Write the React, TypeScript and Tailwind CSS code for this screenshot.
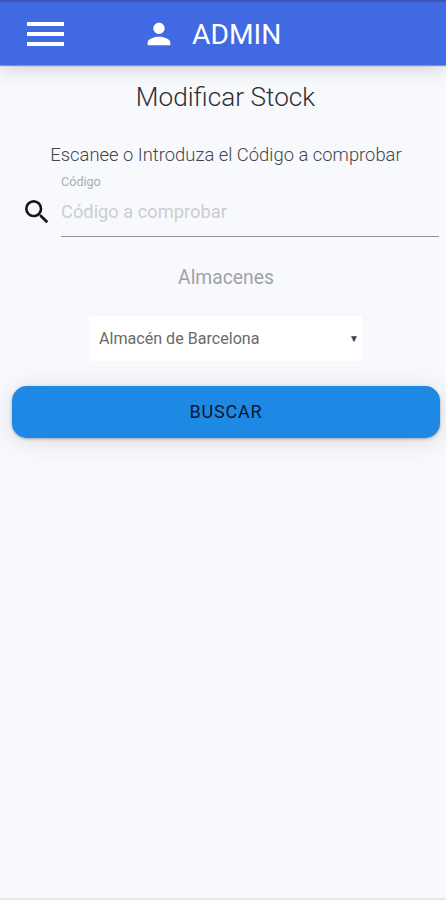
export default function App() {
  return (
    <div className="flex h-[900px] w-full flex-col overflow-hidden border-b-2 border-[#e6e7eb] bg-[#f7f9fd] font-[Roboto,sans-serif] text-[#303030]">
      <header className="flex h-[65px] w-full shrink-0 items-center border-t-2 border-[#3d56b2] bg-[#4169e1] shadow-[0_1px_1px_rgba(60,80,140,0.55),0_4px_18px_rgba(0,0,0,0.16)]">
        <div className="ml-[27px] flex w-[37px] flex-col gap-[6px]">
          <div className="h-[4px] bg-white" />
          <div className="h-[4px] bg-white" />
          <div className="h-[4px] bg-white" />
        </div>
        <svg className="ml-[78px] size-[34px]" viewBox="0 0 24 24" fill="white"><path d="M12 12c2.21 0 4-1.79 4-4s-1.79-4-4-4-4 1.79-4 4 1.79 4 4 4zm0 2c-2.67 0-8 1.34-8 4v2h16v-2c0-2.66-5.33-4-8-4z" /></svg>
        <span className="ml-[16px] pt-[2px] text-[28.2px] leading-8 text-white">ADMIN</span>
      </header>
      <h1 className="mt-[16px] pl-[5px] text-center text-[26.2px] font-light leading-8">Modificar Stock</h1>
      <p className="mt-[30px] pl-[6px] text-center text-[18.4px] font-light leading-6 text-[#444548]">Escanee o Introduza el Código a comprobar</p>
      <div className="ml-[21px] mr-[7px] mt-[6px] flex h-[64px]">
        <svg className="mt-[23px] size-[32px] shrink-0" viewBox="0 0 24 24" fill="#151515"><path d="M15.5 14h-.79l-.28-.27A6.47 6.47 0 0 0 16 9.5 6.5 6.5 0 1 0 9.5 16c1.61 0 3.09-.59 4.23-1.57l.27.28v.79l5 4.99L20.49 19l-4.99-5zm-6 0C7.01 14 5 11.99 5 9.5S7.01 5 9.5 5 14 7.01 14 9.5 11.99 14 9.5 14z" /></svg>
        <label className="ml-[8px] flex grow flex-col border-b border-[#929397] pt-px text-[12.6px] leading-4 text-[#aaaeb3]">
          Código
          <input className="mt-[7px] h-[28px] w-full bg-transparent text-[18.3px] outline-none placeholder:text-[#cccdd1]" placeholder="Código a comprobar" />
        </label>
      </div>
      <div className="mt-[29px] pl-[6px] text-center text-[19.3px] leading-6 text-[#a0a2a6]">Almacenes</div>
      <button className="ml-[89px] mt-[26px] flex h-[45px] w-[273px] items-center justify-between rounded-[2px] bg-white pl-[10px] pr-[3px] text-[16.1px] text-[#6a6a6a]"><span className="pt-px">Almacén de Barcelona</span><span className="text-[10px] text-[#444]">▼</span></button>
      <button className="ml-[12px] mt-[25px] h-[52px] w-[428px] rounded-[15px] bg-[#1e88e5] pb-[2px] text-[18px] tracking-[0.8px] text-[#08192d] shadow-[0_1px_3px_rgba(0,0,0,0.3),0_3px_24px_rgba(0,0,0,0.12)]">BUSCAR</button>
    </div>
  );
}
